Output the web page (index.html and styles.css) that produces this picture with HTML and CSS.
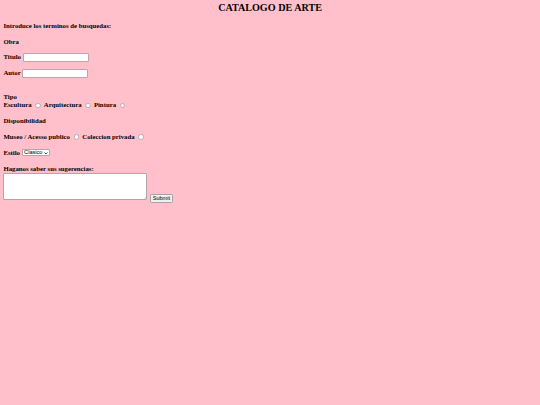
FILE: index.html
```html
<!DOCTYPE html>
<html>
<head>
<meta charset="utf-8">
<title>Catalogo de arte</title>
<link rel="stylesheet" href="styles.css">
</head>
<body class="page">
<h2 class="title">CATALOGO DE ARTE</h2>
<form class="search">
  <p class="row">Introduce los terminos de busquedas:</p>
  <p class="row">Obra</p>
  <p class="row"><span>Titulo</span><input type="text" class="field"></p>
  <p class="row"><span>Autor</span><input type="text" class="field"></p>
  <div class="group tipo">
    <p class="row">Tipo</p>
    <p class="row"><span>Escultura</span><input type="radio" name="tipo" class="radio"><span>Arquitectura</span><input type="radio" name="tipo" class="radio"><span>Pintura</span><input type="radio" name="tipo" class="radio"></p>
  </div>
  <p class="row">Disponibilidad</p>
  <p class="row"><span>Museo / Acesso publico</span><input type="radio" name="disp" class="radio"><span>Coleccion privada</span><input type="radio" name="disp" class="radio"></p>
  <p class="row"><span>Estilo</span>
    <span class="select-wrap">
      <span class="choice-box">Clasico</span>
      <svg class="chev" viewBox="0 0 8 5" width="4" height="2.5"><polyline points="1,1 4,4 7,1" fill="none" stroke="#222" stroke-width="1.6"/></svg>
    </span>
  </p>
  <div class="group">
    <p class="row">Haganos saber sus sugerencias:</p>
    <div class="send">
      <span class="area-wrap">
        <textarea class="notes"></textarea>
        <svg class="grip" viewBox="0 0 4 4" width="3" height="3"><line x1="0.5" y1="3.8" x2="3.8" y2="0.5" stroke="#9a9a9a" stroke-width="0.5"/><line x1="2" y1="3.8" x2="3.8" y2="2" stroke="#9a9a9a" stroke-width="0.5"/></svg>
      </span>
      <input type="submit" value="Submit" class="btn">
    </div>
  </div>
</form>
</body>
</html>
```
FILE: styles.css
```css
html {
  background: #ffc0cb;
}
.page {
  margin: 0;
  padding: 2px 3.4px;
  font-family: "Liberation Serif", "Times New Roman", serif;
  font-weight: bold;
  font-size: 6.75px;
  line-height: 8px;
  color: #000;
}
.title {
  margin: 0;
  font-size: 10.125px;
  line-height: 12px;
  text-align: center;
}
.search {
  display: flex;
  flex-direction: column;
  gap: 7.8px;
  margin-top: 7.8px;
}
.row {
  margin: 0;
  height: 8px;
  display: flex;
  align-items: center;
  white-space: nowrap;
}
.group {
  display: flex;
  flex-direction: column;
}
.tipo {
  margin-top: 8.5px;
}
.field {
  box-sizing: border-box;
  width: 66px;
  height: 9px;
  margin: 0 0 0 1.7px;
  padding: 0;
  border: 1px solid #bfa3a8;
  border-radius: 1px;
  background: #fff;
  font-size: 5.6px;
}
.radio {
  appearance: none;
  -webkit-appearance: none;
  box-sizing: border-box;
  width: 5.5px;
  height: 5.5px;
  margin: 0 3px 0 3.8px;
  border: 1px solid #b7aaac;
  border-radius: 50%;
  background: #fff;
}
.select-wrap {
  position: relative;
  display: inline-block;
  margin-left: 1.7px;
  height: 7px;
}
.choice-box {
  display: block;
  box-sizing: border-box;
  width: 28px;
  height: 7px;
  padding: 0 0 0 1.5px;
  border: 1px solid #b5a5a8;
  border-radius: 1px;
  background: #fff;
  font-family: "Liberation Sans", Arial, sans-serif;
  font-weight: normal;
  font-size: 5.6px;
  line-height: 5px;
  color: #000;
}
.chev {
  position: absolute;
  right: 1.4px;
  top: 2.3px;
}
.send {
  display: flex;
  align-items: flex-start;
}
.area-wrap {
  position: relative;
  display: block;
  width: 144px;
  height: 27px;
}
.notes {
  display: block;
  box-sizing: border-box;
  width: 144px;
  height: 27px;
  margin: 0;
  padding: 0;
  border: 1px solid #b5a5a8;
  border-radius: 1px;
  background: #fff;
  resize: none;
}
.grip {
  position: absolute;
  right: 0.8px;
  bottom: 0.8px;
}
.btn {
  box-sizing: border-box;
  width: 23.4px;
  height: 9px;
  margin: 21px 0 0 2.3px;
  padding: 0;
  border: 1px solid #a8a0a2;
  border-radius: 1.2px;
  background: #efefef;
  font-family: "Liberation Sans", Arial, sans-serif;
  font-weight: normal;
  font-size: 5.6px;
  line-height: 7px;
  color: #000;
}
```
